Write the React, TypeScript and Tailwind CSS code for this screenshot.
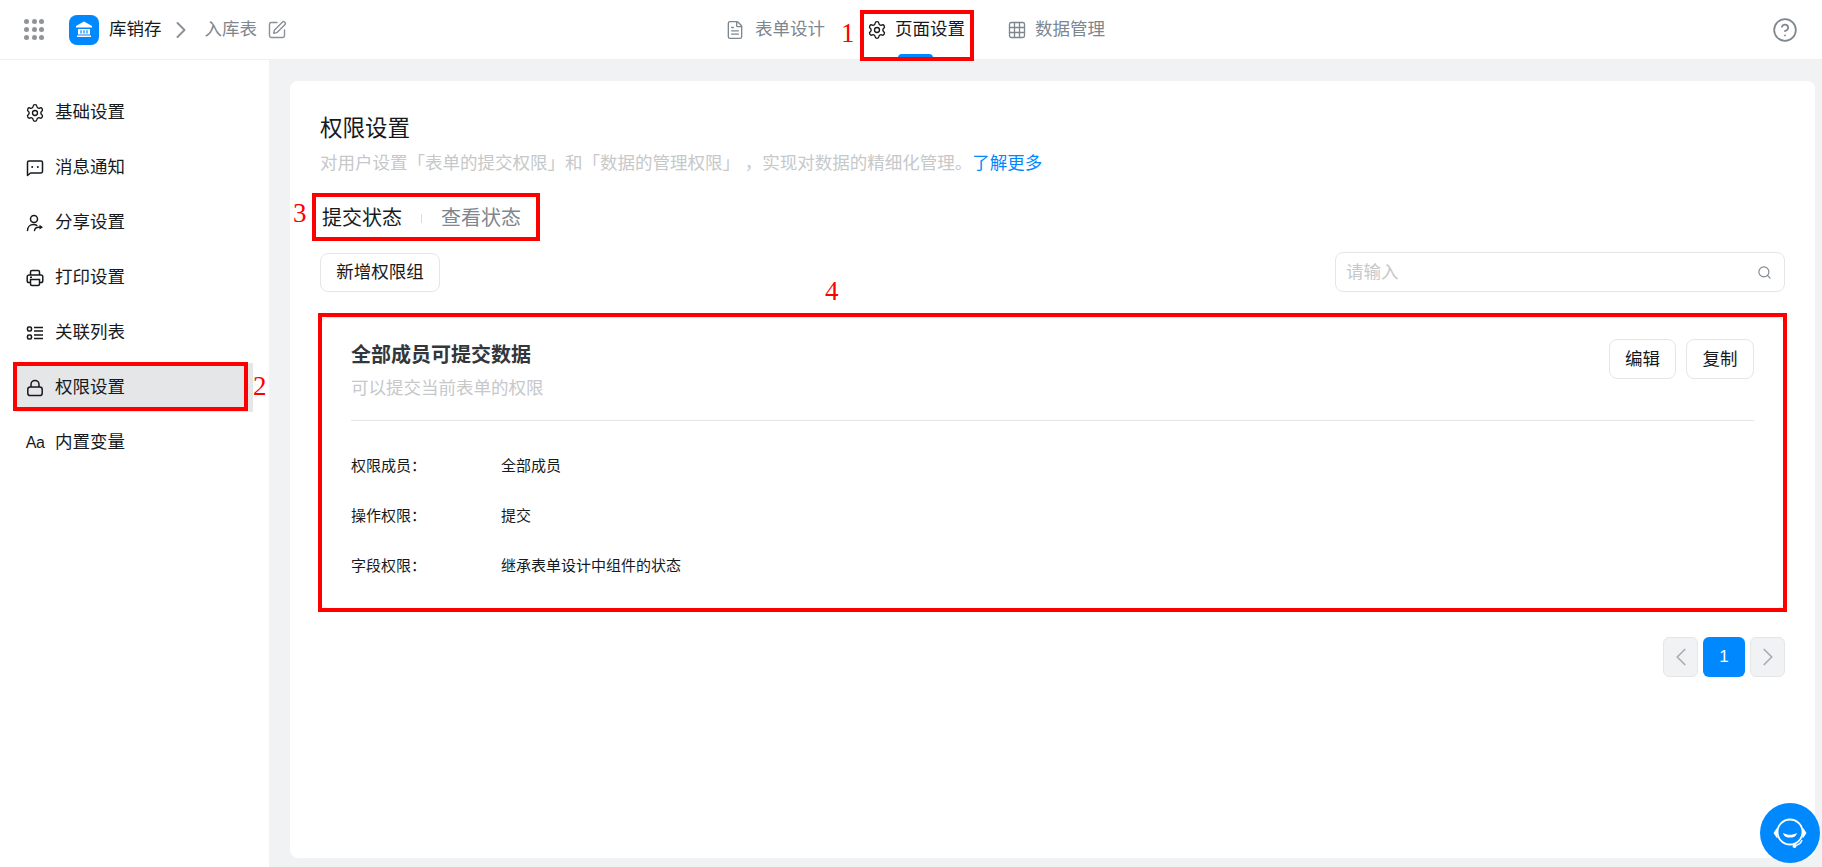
import React from 'react';
import { ChevronLeft, ChevronRight, FileText, Grid3x3, CircleHelp, Search, SquarePen, Settings } from 'lucide-react';

const font = { fontFamily: '"Liberation Sans", "Noto Sans CJK SC", sans-serif' };

const ListIcon: React.FC = () => (
  <svg viewBox="0 0 18 18" className="h-[18px] w-[18px]" fill="none" stroke="#171a1d" strokeWidth="1.6">
    <rect x="1.5" y="3" width="4" height="4" rx="1.4" />
    <rect x="1.5" y="11" width="4" height="4" rx="1.4" />
    <path d="M8 3.500h9M8 7h9M8 11h9M8 14.500h9" />
  </svg>
);

const LockIcon: React.FC = () => (
  <svg viewBox="0 0 18 18" className="h-[18px] w-[18px]" fill="none" stroke="#171a1d" strokeWidth="1.5">
    <rect x="1.800" y="8" width="14.400" height="8.600" rx="2.400" />
    <path d="M5 8V5.400a4 4 0 0 1 8 0V8" />
  </svg>
);

const BubbleIcon: React.FC = () => (
  <svg viewBox="0 0 18 18" className="h-[18px] w-[18px]" fill="none" stroke="#171a1d" strokeWidth="1.5">
    <path d="M1.500 16.500V3.500a1.500 1.500 0 0 1 1.500-1.500h12a1.500 1.500 0 0 1 1.500 1.500v9a1.500 1.500 0 0 1-1.500 1.500H4.500z" strokeLinejoin="round" />
    <circle cx="6.200" cy="8" r="1" fill="#171a1d" stroke="none" />
    <circle cx="11.800" cy="8" r="1" fill="#171a1d" stroke="none" />
  </svg>
);

const ShareIcon: React.FC = () => (
  <svg viewBox="0 0 18 18" className="h-[18px] w-[18px]" fill="none" stroke="#171a1d" strokeWidth="1.5">
    <circle cx="8" cy="5" r="3.500" />
    <path d="M1.500 16.500c0-3.500 2.500-6 6-6 1.300 0 2.400.3 3.300.9" strokeLinecap="round" />
    <path d="M8.500 16.500c.3-2 2-3.300 4-3.300h2.500" strokeLinecap="round" />
    <path d="m13.500 10.800 3.500 2.400-3.500 2.400z" fill="#171a1d" stroke="none" />
  </svg>
);

const PrinterIcon: React.FC = () => (
  <svg viewBox="0 0 18 18" className="h-[18px] w-[18px]" fill="none" stroke="#171a1d" strokeWidth="1.5">
    <path d="M4.500 6V3a1.500 1.500 0 0 1 1.500-1.500h6A1.500 1.500 0 0 1 13.500 3v3" />
    <path d="M4.500 13.500H3A1.800 1.800 0 0 1 1.200 11.700V7.800A1.800 1.800 0 0 1 3 6h12a1.800 1.800 0 0 1 1.800 1.800v3.900a1.800 1.800 0 0 1-1.800 1.800h-1.500" />
    <path d="M4.500 10.500h9V15a1.500 1.500 0 0 1-1.500 1.500H6A1.500 1.500 0 0 1 4.500 15z" />
    <path d="M4 8.200h2" />
  </svg>
);

const menu = [
  { label: '基础设置', icon: <Settings size={20} strokeWidth={1.6} className="shrink-0" /> },
  { label: '消息通知', icon: <BubbleIcon /> },
  { label: '分享设置', icon: <ShareIcon /> },
  { label: '打印设置', icon: <PrinterIcon /> },
  { label: '关联列表', icon: <ListIcon /> },
  { label: '权限设置', icon: <LockIcon />, active: true },
  { label: '内置变量', icon: <span className="text-[16px] leading-none tracking-[-0.5px]">Aa</span> },
];

const rows = [
  ['权限成员：', '全部成员'],
  ['操作权限：', '提交'],
  ['字段权限：', '继承表单设计中组件的状态'],
];

const RedBox: React.FC<{ className: string }> = ({ className }) => (
  <div className={`pointer-events-none absolute border-4 border-[#ff0000] ${className}`} />
);

const RedNum: React.FC<{ className: string; children: React.ReactNode }> = ({ className, children }) => (
  <span className={`pointer-events-none absolute text-[27px] leading-none text-[#ff0000] ${className}`} style={{ fontFamily: '"Liberation Serif", serif' }}>
    {children}
  </span>
);

export default function App() {
  return (
    <div className="relative flex h-[867px] flex-col overflow-hidden bg-[#f1f2f4] text-[17.5px] text-[#171a1d] [text-spacing-trim:space-all]" style={font}>
      <header className="flex h-[60px] shrink-0 items-center bg-white border-b border-[#eeeff1]">
        <div className="flex w-[725px] shrink-0 items-center pl-6">
          <div className="grid w-[20px] grid-cols-3 gap-[3px]">
            {[...Array(9)].map((_, i) => (
              <span key={i} className="h-[5px] w-[5px] rounded-full bg-[#8f9499]" />
            ))}
          </div>
          <div className="ml-[25px] flex h-[30px] w-[30px] items-center justify-center rounded-lg bg-[#0089ff]">
            <svg viewBox="0 0 20 20" className="h-[20px] w-[20px]" fill="#fff">
              <path d="M10 1.500 18 6v1.600H2V6z" />
              <path d="M3 15.500h14V17H3z" />
              <path d="M4 9h12v5.500H4zm2.400 1.200v3.200h1.200v-3.200zm3 0v3.200h1.200v-3.200zm3 0v3.200h1.200v-3.200z" fillRule="evenodd" />
            </svg>
          </div>
          <span className="ml-[10px] leading-none">库销存</span>
          <ChevronRight size={28} strokeWidth={1.7} className="ml-[5px] text-[#8b9197]" />
          <span className="ml-[10px] leading-none text-[#7e868e]">入库表</span>
          <SquarePen size={20} strokeWidth={1.7} className="ml-[10px] text-[#8b9197]" />
        </div>
        <nav className="flex h-full items-center gap-[42px]">
          <div className="flex items-center gap-[10px] text-[#7e868e]">
            <FileText size={20} strokeWidth={1.6} />
            <span>表单设计</span>
          </div>
          <div className="relative flex h-full items-center gap-[8px]">
            <Settings size={20} strokeWidth={1.6} />
            <span>页面设置</span>
            <span className="absolute bottom-0 left-[31px] h-[5px] w-[35px] rounded-t-sm bg-[#0089ff]" />
          </div>
          <div className="flex items-center gap-[8px] text-[#7e868e]">
            <Grid3x3 size={20} strokeWidth={1.6} />
            <span>数据管理</span>
          </div>
        </nav>
        <CircleHelp size={26} strokeWidth={1.6} className="ml-auto mr-[24px] text-[#7e868e]" />
      </header>

      <div className="flex min-h-0 flex-1">
        <aside className="flex w-[269px] shrink-0 flex-col gap-[6px] bg-white px-4 pt-[28px]">
          {menu.map((item) => (
            <div key={item.label} className={`flex h-[49px] items-center gap-[11px] px-[10px] ${item.active ? 'bg-[#e5e6e8]' : ''}`}>
              <span className="flex w-[18px] justify-center">{item.icon}</span>
              <span>{item.label}</span>
            </div>
          ))}
        </aside>

        <main className="min-w-0 flex-1 pb-[9px] pl-[21px] pr-[7px] pt-[21px]">
          <div className="flex h-full flex-col rounded-lg bg-white px-[30px] pt-[34px]">
            <h1 className="text-[22.5px] font-normal leading-[28px]">权限设置</h1>
            <p className="mt-[7px] leading-[26px] text-[#c6c8ca]">
              对用户设置「表单的提交权限」和「数据的管理权限」 ，实现对数据的精细化管理。<span className="text-[#0089ff]">了解更多</span>
            </p>
            <div className="mt-[29px] flex h-[26px] items-center pl-[2px] text-[20px]">
              <span>提交状态</span>
              <span className="mx-[19px] h-[9px] w-px bg-[#d8dadc]" />
              <span className="text-[#7e868e]">查看状态</span>
            </div>
            <div className="mt-[21px] flex items-end justify-between">
              <button className="h-[39px] w-[120px] rounded-lg border border-[#e5e6e8] bg-white">新增权限组</button>
              <div className="flex h-[40px] w-[450px] items-center justify-between rounded-lg border border-[#e5e6e8] pl-[10px] pr-[12px]">
                <span className="text-[#c6c8ca]">请输入</span>
                <Search size={15} strokeWidth={1.8} className="text-[#7e868e]" />
              </div>
            </div>

            <section className="mt-[25px] h-[292px] rounded-lg border border-[#e5e6e8] px-[30px] pt-[21px]">
              <div className="flex h-[82px] items-start justify-between border-b border-[#e5e6e8]">
                <div className="pt-[2px]">
                  <h2 className="text-[20px] font-bold leading-[28px] text-[#33373b]">全部成员可提交数据</h2>
                  <p className="mt-[6px] leading-[26px] text-[#c6c8ca]">可以提交当前表单的权限</p>
                </div>
                <div className="flex gap-[10px]">
                  <button className="h-[40px] w-[67px] rounded-lg border border-[#e5e6e8] bg-white">编辑</button>
                  <button className="h-[40px] w-[68px] rounded-lg border border-[#e5e6e8] bg-white">复制</button>
                </div>
              </div>
              <div className="mt-[35px] flex flex-col gap-[30px] text-[15px] leading-[20px]">
                {rows.map(([label, value]) => (
                  <div key={label} className="flex">
                    <span className="w-[150px] shrink-0">{label}</span>
                    <span>{value}</span>
                  </div>
                ))}
              </div>
            </section>

            <div className="mt-[28px] flex justify-end gap-[5px]">
              <div className="flex h-[40px] w-[35px] items-center justify-center rounded-md border border-[#e5e6e8] bg-[#f1f2f4] text-[#a9adb2]">
                <ChevronLeft size={30} strokeWidth={1.4} className="shrink-0" />
              </div>
              <div className="flex h-[40px] w-[42px] items-center justify-center rounded-md bg-[#0089ff] text-[17px] text-white">1</div>
              <div className="flex h-[40px] w-[35px] items-center justify-center rounded-md border border-[#e5e6e8] bg-[#f1f2f4] text-[#a9adb2]">
                <ChevronRight size={30} strokeWidth={1.4} className="shrink-0" />
              </div>
            </div>
          </div>
        </main>
      </div>

      <div className="absolute left-[1760px] top-[803px] flex h-[60px] w-[60px] items-center justify-center rounded-full bg-[#0089ff]">
        <svg viewBox="0 0 40 40" className="h-[40px] w-[40px]" fill="none" stroke="#fff">
          <circle cx="20" cy="19" r="12.500" strokeWidth="1.800" />
          <path d="M7 15.500 4 20l3 4.500zM33 15.500l3 4.500-3 4.500z" fill="#fff" strokeWidth="1" />
          <path d="M13 20c4.500 2.400 9.500 2.400 14 0-1 3.600-3.500 4.600-7 4.600s-6-1-7-4.600z" fill="#fff" stroke="none" />
          <path d="M32 27c-1 3-3.500 5-7 5.500" strokeWidth="1.500" />
          <circle cx="24.500" cy="33" r="2" fill="#fff" stroke="none" />
        </svg>
      </div>

      <RedBox className="left-[860px] top-[10px] h-[51px] w-[114px]" />
      <RedBox className="left-[13px] top-[362px] h-[49px] w-[235px]" />
      <RedBox className="left-[312px] top-[193px] h-[48px] w-[228px]" />
      <RedBox className="left-[318px] top-[313px] h-[299px] w-[1469px]" />
      <RedNum className="left-[841px] top-[20px]">1</RedNum>
      <RedNum className="left-[253px] top-[373px]">2</RedNum>
      <RedNum className="left-[293px] top-[200px]">3</RedNum>
      <RedNum className="left-[825px] top-[278px]">4</RedNum>
    </div>
  );
}
